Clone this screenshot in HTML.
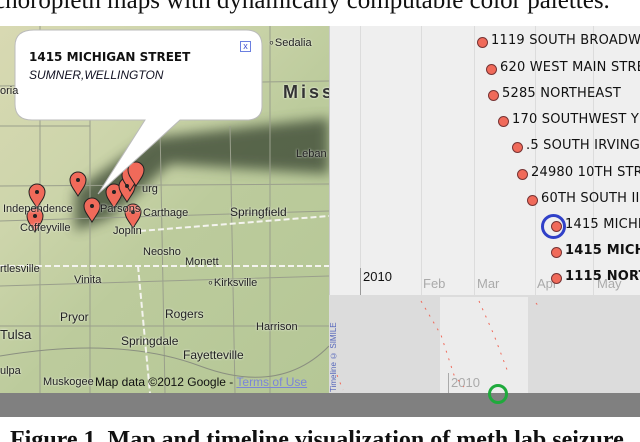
<!DOCTYPE html>
<html><head><style>
body{margin:0;width:640px;height:442px;overflow:hidden;background:#fff;position:relative;font-family:"Liberation Sans",sans-serif}
.abs{position:absolute}
.lbl{position:absolute;font-size:11px;color:#222;text-shadow:0 0 2px #fff}
.ev{position:absolute;font-size:13px;color:#111;white-space:nowrap;font-family:"DejaVu Sans","Liberation Sans",sans-serif;letter-spacing:0.2px}
.dot{position:absolute;width:9px;height:9px;border-radius:50%;background:#f06a5a;border:1px solid #733}
.ml{position:absolute;top:0;height:269px;width:1px;background:#dcdcdc}
</style></head><body>
<div class="abs" style="left:0;top:0;width:640px;height:26px;overflow:hidden"><div class="abs" style="left:-6px;top:-13px;font-family:'Liberation Serif',serif;font-size:25px;color:#111;white-space:nowrap">choropleth maps with dynamically computable color palettes.</div></div>

<!-- map -->
<div class="abs" style="left:0;top:26px;width:329px;height:367px;overflow:hidden;background:linear-gradient(135deg,#d8d9b2 0%,#cdd5ab 30%,#bccb9c 55%,#b5c796 100%)">
<svg width="329" height="367" class="abs" style="left:0;top:0">
<defs><filter id="b"><feGaussianBlur stdDeviation="6"/></filter></defs>
<polygon points="75,165 150,112 329,92 329,148 170,138 110,192 75,205" fill="#4e5a42" opacity="0.9" filter="url(#b)"/>
<g stroke="#9a9f8c" stroke-width="1" fill="none">
<path d="M0,60 L329,55 M0,100 L90,100 M0,160 L329,158 M0,195 L329,185 M40,0 L40,367 M90,60 L90,367 M160,100 L165,367 M230,100 L235,367 M270,0 L270,367 M0,260 L329,250 M0,300 L329,300"/>
<path d="M0,330 Q120,310 200,340 T329,320" stroke="#8a8f80"/>
</g>
<path d="M0,240 L329,240 M138,240 L150,367 M140,205 L329,190" stroke="#f4f4ee" stroke-width="2" stroke-dasharray="6,3" fill="none"/>
<defs><path id="m" d="M0,0 C-5,-8 -8,-11 -8,-16 A8,8 0 1 1 8,-16 C8,-11 5,-8 0,0Z"/></defs>
<g fill="#f06a5a" stroke="#222" stroke-width="1">
<use href="#m" x="37" y="182"/><use href="#m" x="35" y="206"/><use href="#m" x="78" y="170"/>
<use href="#m" x="92" y="196"/><use href="#m" x="114" y="182"/><use href="#m" x="127" y="176"/>
<use href="#m" x="130" y="165"/><use href="#m" x="133" y="202"/><use href="#m" x="136" y="160"/>
</g>
<g fill="#222"><circle cx="37" cy="166" r="2"/><circle cx="35" cy="190" r="2"/><circle cx="78" cy="154" r="2"/><circle cx="92" cy="180" r="2"/><circle cx="114" cy="166" r="2"/><circle cx="127" cy="160" r="2"/><circle cx="133" cy="186" r="2"/></g>
<path d="M34,4 H246 Q262,4 262,20 V80 Q262,94 246,94 H180 L98,168 L145,94 H32 Q15,94 15,78 V20 Q15,4 34,4Z" fill="#fff" stroke="#bbb"/>
</svg>
<div class="abs" style="left:29px;top:24px;font-size:12px;font-weight:bold;font-family:'DejaVu Sans',sans-serif;color:#111">1415 MICHIGAN STREET</div>
<div class="abs" style="left:29px;top:42px;font-size:12px;font-style:italic;color:#112">SUMNER,WELLINGTON</div>
<div class="abs" style="left:240px;top:15px;width:9px;height:9px;border:1px solid #6b7fe0;color:#4050d0;font-size:9px;line-height:9px;text-align:center">x</div>
<div class="lbl" style="left:268px;top:10px">∘Sedalia</div>
<div class="lbl" style="left:283px;top:56px;font-size:18px;font-weight:bold;letter-spacing:3px;color:#333">Miss</div>
<div class="lbl" style="left:0;top:59px">oria</div>
<div class="lbl" style="left:296px;top:122px">Leban</div>
<div class="lbl" style="left:3px;top:177px">Independence</div>
<div class="lbl" style="left:20px;top:196px">Coffeyville</div>
<div class="lbl" style="left:100px;top:177px">Parsons</div>
<div class="lbl" style="left:143px;top:181px">Carthage</div>
<div class="lbl" style="left:230px;top:179px;font-size:12px">Springfield</div>
<div class="lbl" style="left:113px;top:199px">Joplin</div>
<div class="lbl" style="left:142px;top:157px">urg</div>
<div class="lbl" style="left:143px;top:220px">Neosho</div>
<div class="lbl" style="left:185px;top:230px">Monett</div>
<div class="lbl" style="left:0;top:237px">rtlesville</div>
<div class="lbl" style="left:74px;top:248px">Vinita</div>
<div class="lbl" style="left:207px;top:250px">∘Kirksville</div>
<div class="lbl" style="left:60px;top:284px;font-size:12px">Pryor</div>
<div class="lbl" style="left:165px;top:281px;font-size:12px">Rogers</div>
<div class="lbl" style="left:256px;top:295px">Harrison</div>
<div class="lbl" style="left:0;top:301px;font-size:13px">Tulsa</div>
<div class="lbl" style="left:121px;top:308px;font-size:12px">Springdale</div>
<div class="lbl" style="left:183px;top:322px;font-size:12px">Fayetteville</div>
<div class="lbl" style="left:0;top:339px">ulpa</div>
<div class="lbl" style="left:43px;top:350px">Muskogee</div>
<div class="abs" style="left:95px;top:349px;font-size:12px;color:#111">Map data ©2012 Google - <span style="color:#7b85d8;text-decoration:underline">Terms of Use</span></div>
</div>

<!-- timeline -->
<div class="abs" style="left:329px;top:26px;width:311px;height:269px;background:#efefef;overflow:hidden">
<div class="abs" style="left:0;top:0;width:1px;height:269px;background:#ccc"></div>
<div class="ml" style="left:31px"></div><div class="ml" style="left:92px"></div><div class="ml" style="left:145px"></div><div class="ml" style="left:206px"></div><div class="ml" style="left:264px"></div>
<div class="abs" style="left:31px;top:242px;width:1px;height:27px;background:#999"></div>
<div class="abs" style="left:34px;top:243px;font-size:13px;color:#111">2010</div>
<div class="abs" style="left:94px;top:250px;font-size:13px;color:#aaa">Feb</div>
<div class="abs" style="left:148px;top:250px;font-size:13px;color:#aaa">Mar</div>
<div class="abs" style="left:208px;top:250px;font-size:13px;color:#aaa">Apr</div>
<div class="abs" style="left:268px;top:250px;font-size:13px;color:#aaa">May</div>
<div class="dot" style="left:148px;top:11px"></div><div class="ev" style="left:162px;top:7px">1119 SOUTH BROADWAY</div>
<div class="dot" style="left:157px;top:38px"></div><div class="ev" style="left:171px;top:34px">620 WEST MAIN STREET</div>
<div class="dot" style="left:159px;top:64px"></div><div class="ev" style="left:173px;top:60px">5285 NORTHEAST</div>
<div class="dot" style="left:169px;top:90px"></div><div class="ev" style="left:183px;top:86px">170 SOUTHWEST Y</div>
<div class="dot" style="left:183px;top:116px"></div><div class="ev" style="left:197px;top:112px">.5 SOUTH IRVING</div>
<div class="dot" style="left:188px;top:143px"></div><div class="ev" style="left:202px;top:139px">24980 10TH STREET</div>
<div class="dot" style="left:198px;top:169px"></div><div class="ev" style="left:212px;top:165px">60TH SOUTH II</div>
<div class="dot" style="left:222px;top:195px"></div><div class="ev" style="left:236px;top:191px">1415 MICHIGAN</div>
<div class="abs" style="left:212px;top:188px;width:19px;height:19px;border:3px solid #3040c8;border-radius:50%"></div>
<div class="dot" style="left:222px;top:221px"></div><div class="ev" style="left:236px;top:217px;font-weight:bold">1415 MICHIGAN</div>
<div class="dot" style="left:222px;top:247px"></div><div class="ev" style="left:236px;top:243px;font-weight:bold">1115 NORTH</div>
</div>

<div class="abs" style="left:329px;top:295px;width:311px;height:98px;background:#dcdcdc"></div>
<div class="abs" style="left:440px;top:297px;width:88px;height:96px;background:#ececec"></div>
<div class="abs" style="left:448px;top:373px;width:1px;height:20px;background:#aaa"></div>
<div class="abs" style="left:451px;top:375px;font-size:13px;color:#aaa">2010</div>
<svg class="abs" style="left:329px;top:295px" width="311" height="98">
<g stroke="#f06a5a" stroke-width="1" stroke-dasharray="2,6" fill="none">
<path d="M92,6 L112,40 L125,80 L135,92"/><path d="M150,6 L165,40 L180,80"/><path d="M207,8 L210,12"/><path d="M8,80 L14,95"/></g></svg>
<div class="abs" style="left:329px;top:312px;width:12px;height:80px;font-size:8px;color:#5566bb;writing-mode:vertical-rl;transform:rotate(180deg)">Timeline © SIMILE</div>
<div class="abs" style="left:488px;top:384px;width:14px;height:14px;border:3px solid #1faa3c;border-radius:50%;z-index:2"></div>

<div class="abs" style="left:0;top:393px;width:640px;height:24px;background:#808080"></div>
<div class="abs" style="left:0;top:417px;width:640px;height:25px;overflow:hidden"><div class="abs" style="left:10px;top:10px;font-family:'Liberation Serif',serif;font-weight:bold;font-size:24px;color:#111;white-space:nowrap">Figure 1. Map and timeline visualization of meth lab seizure</div></div>
</body></html>
